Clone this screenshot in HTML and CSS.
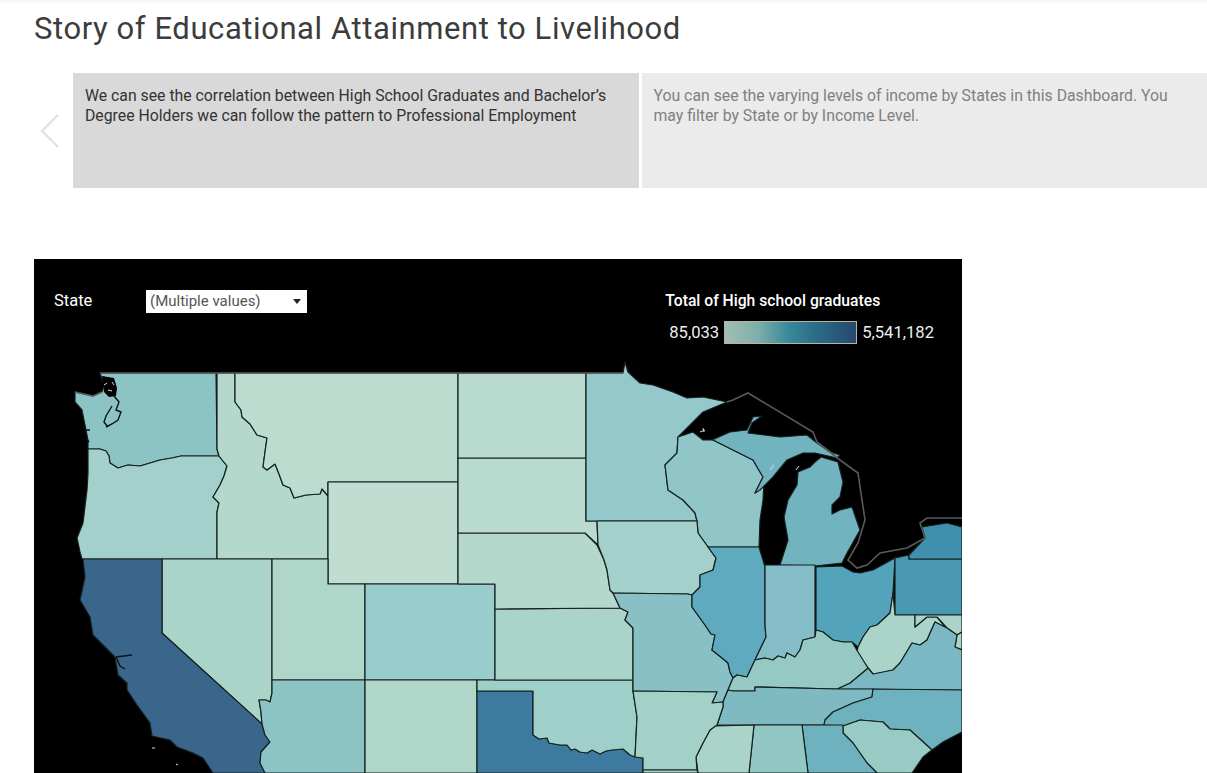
FILE: index.html
```html
<!DOCTYPE html>
<html lang="en">
  <head>
    <meta charset="UTF-8" />
    <title>Story of Educational Attainment to Livelihood</title>
    <link rel="stylesheet" href="styles.css">
  </head>
  <body>
    <h1 class="title">Story of Educational Attainment to Livelihood</h1>

    <div class="nav">
      <button class="prev" aria-label="Previous">
        <svg width="20" height="34" viewBox="0 0 20 34"><path d="M18 1 L2 17 L18 33" fill="none" stroke="#e2e2e2" stroke-width="2.4"/></svg>
      </button>
      <div class="point active">We can see the correlation between High School Graduates and Bachelor’s Degree Holders we can follow the pattern to Professional Employment</div>
      <div class="point">You can see the varying levels of income by States in this Dashboard. You may filter by State or by Income Level.</div>
    </div>

    <section class="board">
      <div class="controls">
        <div class="filter">
          <span class="filter-label">State</span>
          <div class="select"><span class="select-text">(Multiple values)</span><i class="caret"></i></div>
        </div>
        <div class="legend">
          <div class="legend-title">Total of High school graduates</div>
          <div class="legend-row">
            <span>85,033</span>
            <div class="ramp"></div>
            <span>5,541,182</span>
          </div>
        </div>
      </div>

      <!-- viewBox uses page coordinates -->
      <svg class="map" viewBox="34 360 928 413" width="928" height="413">
        <g class="states">
          <polygon class="wa" points="100,373 216,373 217,449 219,456 181,456 172,458 160,460 150,463 140,466 128,465 118,468 110,463 109,456 106,451 100,449 88,449 88,440 85,425 82,410 75,402 75,392 93,396 102,392 104,385"/>
          <polygon class="or" points="88,449 100,449 106,451 109,456 110,463 118,468 128,465 140,466 150,463 160,460 172,458 181,456 219,456 227,466 224,476 220,485 213,497 219,503 217,512 217,559 82,559 80,552 77,538 83,523 87,490 88,473"/>
          <polygon class="id" points="217,373 235,373 235,402 241,410 242,417 250,424 257,435 267,438 265,452 263,467 267,470 275,464 279,474 283,485 290,488 294,498 306,495 320,494 322,489 328,496 328,559 217,559 217,512 219,503 213,497 220,485 224,476 227,466 219,456 217,449"/>
          <polygon class="mt" points="235,373 458,373 458,482 328,482 328,496 322,489 320,494 306,495 294,498 290,488 283,485 279,474 275,464 267,470 263,467 265,452 267,438 257,435 250,424 242,417 241,410 235,402"/>
          <polygon class="wy" points="328,482 458,482 458,584 328,584"/>
          <polygon class="nv" points="162,559 272,559 272,693 270,702 266,700 259,700 261,712 262,724 162,633"/>
          <polygon class="ca" points="83,559 162,559 162,633 262,724 265,735 270,742 261,752 260,763 265,773 213,773 203,758 193,753 177,747 170,740 152,736 150,723 137,705 127,690 127,683 118,675 115,657 104,646 93,635 90,617 80,600 85,577"/>
          <polygon class="ut" points="272,559 328,559 328,584 365,584 365,680 272,680"/>
          <polygon class="az" points="272,680 365,680 365,773 265,773 260,763 261,752 270,742 265,735 262,724 261,712 259,700 266,700 270,702 272,693"/>
          <polygon class="co" points="365,584 495,584 495,680 365,680"/>
          <polygon class="nm" points="365,680 477,680 477,773 365,773"/>
          <polygon class="tx" points="477,691 533,691 533,735 539,739 547,738 549,743 560,745 567,745 571,750 575,749 580,752 587,753 592,750 600,754 606,751 612,750 623,749 630,755 643,758 643,773 477,773"/>
          <polygon class="ok" points="477,680 633,680 633,691 637,717 635,757 630,755 623,749 612,750 606,751 600,754 592,750 587,753 580,752 575,749 571,750 567,745 560,745 549,743 547,738 539,739 533,735 533,691 477,691"/>
          <polygon class="ks" points="495,609 620,608 628,612 625,620 633,628 633,680 495,680"/>
          <polygon class="ne" points="458,533 585,533 597,545 604,560 607,570 610,590 613,593 620,608 495,609 495,584 458,584"/>
          <polygon class="sd" points="458,458 586,458 586,521 597,521 598,545 585,533 458,533"/>
          <polygon class="nd" points="458,373 586,373 586,458 458,458"/>
          <polygon class="mn" points="586,373 623,373 625,362 628,372 640,383 653,385 673,392 687,398 703,397 727,402 703,412 678,437 677,453 665,465 668,490 683,500 695,513 697,521 597,521 586,521"/>
          <polygon class="wi" points="678,437 693,432 703,440 713,440 753,460 760,472 763,477 755,493 764,482 763,500 760,520 759,547 708,547 698,533 697,521 695,513 683,500 668,490 665,465 677,453"/>
          <polygon class="mi" points="712,440 730,432 747,430 753,417 762,416 752,423 748,433 780,437 807,435 817,443 830,452 840,455 837,458 815,453 803,453 787,460 773,477 760,490 755,493 763,477 760,472 753,460 713,440"/>
          <polygon class="mi" points="780,565 788,540 784,517 788,500 797,485 798,472 810,467 815,462 821,457 838,462 843,482 840,497 832,505 832,514 840,510 852,507 860,530 847,553 842,563 815,566"/>
          <polygon class="ia" points="597,521 697,521 698,533 708,547 716,558 713,570 700,575 700,587 692,595 688,594 613,593 610,590 607,570 604,560 598,545"/>
          <polygon class="mo" points="613,593 688,594 692,595 692,607 705,625 711,634 715,635 712,650 722,658 728,663 730,672 733,678 728,690 723,702 712,703 717,692 633,691 633,628 625,620 628,612 620,608"/>
          <polygon class="il" points="708,547 759,547 765,567 765,625 766,637 755,660 747,677 737,675 733,678 730,672 728,663 722,658 712,650 715,635 711,634 705,625 692,607 692,595 700,587 700,575 713,570 716,558"/>
          <polygon class="in" points="765,565 815,565 815,637 803,640 800,650 795,657 787,653 785,658 778,656 773,660 765,658 755,660 766,637 765,625"/>
          <polygon class="oh" points="816,567 842,566 853,572 860,573 873,570 895,558 893,593 890,613 877,625 870,627 863,637 858,647 852,642 843,642 833,640 823,632 816,630"/>
          <polygon class="pa" points="895,558 909,555 909,559 962,559 962,615 895,615"/>
          <polygon class="ny" points="909,555 925,538 922,527 947,523 962,527 962,559 909,559"/>
          <polygon class="wv" points="893,593 895,615 915,615 915,627 927,617 937,617 946,628 935,622 927,640 920,645 912,643 900,663 893,670 880,673 873,674 868,668 857,652 858,647 863,637 870,627 877,625 890,613"/>
          <polygon class="md" points="915,615 962,615 962,632 957,635 947,628 937,617 927,617 915,627"/>
          <polygon class="md" points="957,635 962,632 962,650 955,647"/>
          <polygon class="va" points="837,689 850,683 868,668 873,674 893,670 900,663 912,643 920,645 927,640 935,622 947,628 957,635 955,647 962,650 962,690"/>
          <polygon class="ky" points="733,678 737,675 747,677 755,660 765,658 773,660 778,656 785,658 787,653 795,657 800,650 803,640 815,637 816,630 823,632 833,640 843,642 852,642 858,652 868,668 850,683 837,689 755,687 755,691 733,691 728,690"/>
          <polygon class="tn" points="728,690 733,691 755,691 755,687 837,689 873,689 872,697 853,703 833,712 825,720 824,725 717,725 723,707 723,702"/>
          <polygon class="nc" points="873,689 962,690 962,732 943,742 932,750 910,730 890,729 883,722 860,720 843,726 824,725 825,720 833,712 853,703 872,697"/>
          <polygon class="sc" points="843,726 860,720 883,722 890,729 910,730 932,750 923,757 912,773 877,773 867,763 853,743 843,733"/>
          <polygon class="ga" points="802,725 843,725 843,733 853,743 867,763 877,773 808,773"/>
          <polygon class="al" points="754,725 802,725 808,773 749,773"/>
          <polygon class="ms" points="715,726 754,725 749,773 698,773 696,757 703,743 710,730"/>
          <polygon class="ar" points="633,691 717,692 712,703 723,702 723,707 717,725 710,730 703,743 696,757 697,770 643,770 643,758 635,757 637,717"/>
          <polygon class="la" points="643,770 697,770 698,773 643,773"/>
        </g>

        <!-- inland water and small coast bits -->
        <path class="water" d="M102 376 L114 378 L117 388 L116 396 L109 397 L104 392 Z"/>
        <path class="strand" d="M114 396 L119 402 L116 410 L121 412 L118 420 L112 424 L106 427 M112 406 L106 416 L104 422 L108 427 M85 430 L90 430 M86 438 L89 442"/>
        <path class="strand" d="M116 657 L132 655 M116 657 L120 666 L125 669"/>
        <path class="flecks" d="M104 385 l3 -2 M108 390 l4 1 M112 382 l2 3 M700 432 l5 -2 M703 428 l1 4 M770 470 l4 -5 M796 470 l3 -4 M152 748 l3 0 M176 764 l2 1"/>

        <path class="border" d="M100 373 L623 373 M75 392 L93 396 L102 392 M727 402 L733 400 L748 393 L813 432 L817 442 L830 452 L840 460 L858 473 L862 500 L865 520 L858 543 L848 560 L857 568 L867 565 L880 553 L907 548 L925 538 L920 523 L927 518 L962 518"/>
      </svg>
    </section>
  </body>
</html>
```

FILE: styles.css
```css
* {
  box-sizing: border-box;
}
html,
body {
  height: 100%;
}
body {
  margin: 0;
  overflow: hidden;
  display: flex;
  flex-direction: column;
  background: #fff;
  font-family: Roboto, "Liberation Sans", sans-serif;
  border-top: 3px solid #f8f8f8;
}
.title {
  margin: 0;
  padding: 7px 0 0 34px;
  height: 70px;
  font-size: 31px;
  letter-spacing: 0.58px;
  line-height: 38px;
  font-weight: 400;
  color: #3c3c3c;
}

/* story points */
.nav {
  display: flex;
  height: 115px;
  gap: 3px;
  flex: none;
}
.prev {
  width: 70px;
  padding: 0 0 0 40px;
  border: none;
  background: none;
  display: flex;
  align-items: center;
  justify-content: flex-start;
  flex: none;
}
.point {
  flex: 1;
  padding: 13px 20px 0 12px;
  font-size: 15.8px;
  line-height: 20px;
  background: #ebebeb;
  color: #808080;
}
.point.active {
  background: #d9d9d9;
  color: #333;
}

/* dashboard */
.board {
  margin: 71px 0 0 34px;
  width: 928px;
  flex: 1;
  min-height: 0;
  overflow: hidden;
  background: #000;
  color: #fff;
}
.controls {
  height: 101px;
  display: flex;
  justify-content: space-between;
  padding: 31px 28px 0 20px;
}
.filter {
  display: flex;
  align-items: flex-start;
}
.filter-label {
  width: 92px;
  margin-top: 1px;
  font-size: 16.5px;
  line-height: 20px;
}
.select {
  width: 161px;
  height: 23px;
  padding-left: 4px;
  display: flex;
  align-items: center;
  justify-content: space-between;
  background: #fff;
  color: #555;
  font-size: 15px;
}
.select-text {
  margin-top: -2px;
}
.caret {
  margin-right: 6px;
  border-left: 4px solid transparent;
  border-right: 4px solid transparent;
  border-top: 5px solid #222;
}
.legend-title {
  margin: 1px 0 0 -4px;
  font-size: 15.7px;
  font-weight: 500;
  line-height: 20px;
}
.legend-row {
  margin-top: 10px;
  display: flex;
  align-items: center;
  justify-content: flex-end;
  gap: 5px;
  font-size: 16.6px;
  color: #eee;
}
.ramp {
  width: 133px;
  height: 23px;
  border: 1px solid #b8b3a2;
  background: linear-gradient(to right, #a0bfb3 0%, #7faeab 25%, #3a8a99 48%, #2a6b88 70%, #26486f 100%);
}

/* map */
.map {
  display: block;
}
.states polygon {
  stroke: #14211f;
  stroke-width: 1.2;
  stroke-linejoin: round;
}
.water {
  fill: #000;
}
.strand {
  fill: none;
  stroke: #0b1212;
  stroke-width: 1.4;
}
.flecks {
  fill: none;
  stroke: #cfe6dc;
  stroke-width: 1;
}
.border {
  fill: none;
  stroke: #5a5a5a;
  stroke-width: 1.6;
}
.wa, .az { fill: #8cc4c6; }
.or { fill: #a3d0ca; }
.id, .ne { fill: #b4d8cc; }
.mt { fill: #bcdcd0; }
.wy { fill: #bfddd1; }
.nv, .ks, .wv, .ms, .md { fill: #abd4c9; }
.ca { fill: #3a668c; }
.ut, .nm { fill: #b0d6ca; }
.co { fill: #99cccc; }
.tx { fill: #3e7aa0; }
.ok { fill: #9fcfc9; }
.sd, .nd { fill: #b9dace; }
.mn { fill: #95c8ca; }
.ia { fill: #a3d0cb; }
.mo { fill: #88c0c5; }
.wi { fill: #90c6c8; }
.il { fill: #5faabf; }
.in { fill: #84bdc7; }
.oh { fill: #53a3bb; }
.pa { fill: #4898b2; }
.ny { fill: #3f90ad; }
.mi { fill: #72b3c0; }
.ky { fill: #97c9c4; }
.va { fill: #7bb8c3; }
.tn { fill: #7fbac2; }
.nc, .ga { fill: #6eb1bf; }
.sc { fill: #99cbc5; }
.al { fill: #93c7c3; }
.ar, .la { fill: #a4d1c7; }
```
